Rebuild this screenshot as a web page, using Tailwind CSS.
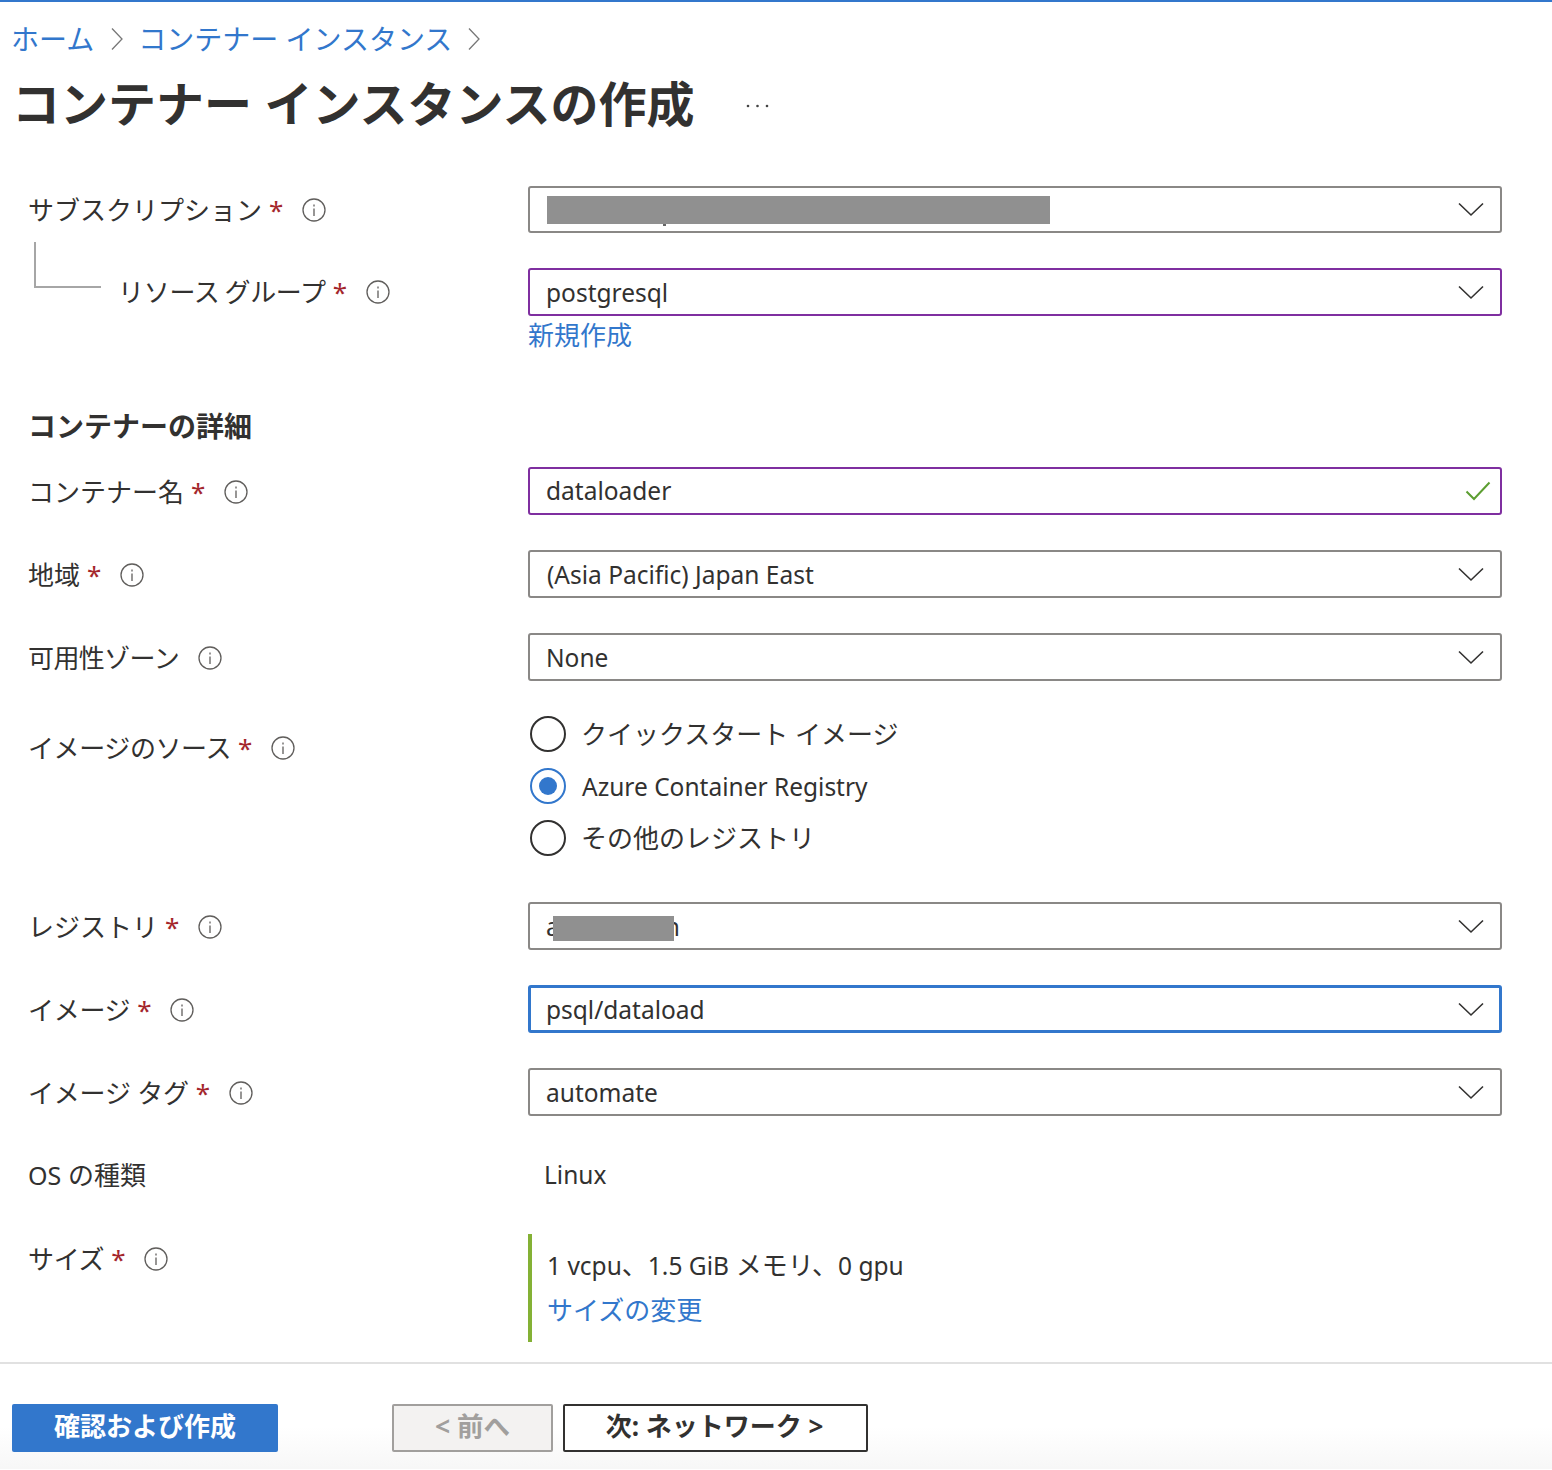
<!DOCTYPE html>
<html lang="ja">
<head>
<meta charset="utf-8">
<script src="https://cdn.jsdelivr.net/npm/@tailwindcss/browser@4"></script>
</head>
<body class="bg-white">
<div class="relative w-[1552px] h-[1470px] overflow-hidden border-t-2 border-[#3277cc] text-[#323130] text-[26px] leading-[36px] font-['Noto_Sans','Noto_Sans_CJK_JP',sans-serif]">

  <nav class="flex items-center h-[36px] mt-[19px] pl-[11px] text-[28px] text-[#3277cc]">
    <span>ホーム</span>
    <svg class="w-[14px] h-[24px] ml-[16px] mr-[14px]" viewBox="0 0 14 24" fill="none" stroke="#777" stroke-width="1.3"><path d="M2 1.500 L12 12 L2 22.500"/></svg>
    <span>コンテナー インスタンス</span>
    <svg class="w-[14px] h-[24px] ml-[15px]" viewBox="0 0 14 24" fill="none" stroke="#777" stroke-width="1.3"><path d="M2 1.500 L12 12 L2 22.500"/></svg>
  </nav>

  <div class="flex items-center h-[64px] mt-[15px] pl-[12px]">
    <h1 class="text-[48px] leading-[64px] font-bold">コンテナー インスタンスの作成</h1>
    <svg class="w-[24px] h-[4px] ml-[51px] mt-[4px]" viewBox="0 0 24 4" fill="#444"><circle cx="2" cy="2" r="1.300"/><circle cx="11.500" cy="2" r="1.300"/><circle cx="21" cy="2" r="1.300"/></svg>
  </div>

  <main class="pl-[28px] pt-[50px]">
    <!-- subscription -->
    <div class="flex h-[47px] mb-[35px]">
      <div class="w-[500px] flex items-center">サブスクリプション<span class="text-[#a4262c] ml-[7px]">*</span>
        <svg class="w-[24px] h-[24px] ml-[19px]" viewBox="0 0 24 24" fill="none" stroke="#605e5c" stroke-width="1.300"><circle cx="12" cy="12" r="11"/><path d="M12 10.500V18M12 6.500V8.500"/></svg>
      </div>
      <div class="relative w-[974px] h-[47px] flex items-center justify-between border-2 border-[#8a8886] rounded-[3px] pl-[17px] pr-[16px]">
        <div class="w-[503px] h-[28px] bg-[#909090]"></div>
        <span class="absolute left-[133px] top-[36px] w-[3px] h-[2px] bg-[#666]"></span>
        <svg class="w-[26px] h-[15px]" viewBox="0 0 26 15" fill="none" stroke="#323130" stroke-width="1.600"><path d="M1 1.500 L13 13 L25 1.500"/></svg>
      </div>
    </div>

    <!-- resource group -->
    <div class="flex h-[48px]">
      <div class="w-[500px] flex items-center pl-[90px] tracking-[-0.3px] [word-spacing:-1.500px]">リソース グループ<span class="text-[#a4262c] ml-[7px]">*</span>
        <svg class="w-[24px] h-[24px] ml-[19px]" viewBox="0 0 24 24" fill="none" stroke="#605e5c" stroke-width="1.300"><circle cx="12" cy="12" r="11"/><path d="M12 10.500V18M12 6.500V8.500"/></svg>
      </div>
      <div class="w-[974px] h-[48px] flex items-center justify-between border-2 border-[#7f2fa0] rounded-[3px] pl-[16px] pr-[16px]">
        <span class="text-[24.5px] mt-[2px]">postgresql</span>
        <svg class="w-[26px] h-[15px]" viewBox="0 0 26 15" fill="none" stroke="#323130" stroke-width="1.600"><path d="M1 1.500 L13 13 L25 1.500"/></svg>
      </div>
    </div>
    <div class="pl-[500px] h-[40px] leading-[38px] text-[#3277cc]">新規作成</div>

    <h2 class="font-bold text-[28px] leading-[36px] mt-[52px] mb-[23px]">コンテナーの詳細</h2>

    <!-- container name -->
    <div class="flex h-[48px] mb-[35px]">
      <div class="w-[500px] pt-[1px] flex items-center">コンテナー名<span class="text-[#a4262c] ml-[7px]">*</span>
        <svg class="w-[24px] h-[24px] ml-[19px]" viewBox="0 0 24 24" fill="none" stroke="#605e5c" stroke-width="1.300"><circle cx="12" cy="12" r="11"/><path d="M12 10.500V18M12 6.500V8.500"/></svg>
      </div>
      <div class="w-[974px] h-[48px] flex items-center justify-between border-2 border-[#7f2fa0] rounded-[3px] pl-[16px] pr-[9px]">
        <span class="text-[24.5px]">dataloader</span>
        <svg class="w-[26px] h-[20px]" viewBox="0 0 26 20" fill="none" stroke="#5c9e31" stroke-width="2"><path d="M1.500 10.500 L9 18 L24.500 1.500"/></svg>
      </div>
    </div>

    <!-- region -->
    <div class="flex h-[48px] mb-[35px]">
      <div class="w-[500px] pt-[1px] flex items-center">地域<span class="text-[#a4262c] ml-[7px]">*</span>
        <svg class="w-[24px] h-[24px] ml-[19px]" viewBox="0 0 24 24" fill="none" stroke="#605e5c" stroke-width="1.300"><circle cx="12" cy="12" r="11"/><path d="M12 10.500V18M12 6.500V8.500"/></svg>
      </div>
      <div class="w-[974px] h-[48px] flex items-center justify-between border-2 border-[#8a8886] rounded-[3px] pl-[17px] pr-[16px]">
        <span class="text-[24.5px] mt-[2px]">(Asia Pacific) Japan East</span>
        <svg class="w-[26px] h-[15px]" viewBox="0 0 26 15" fill="none" stroke="#323130" stroke-width="1.600"><path d="M1 1.500 L13 13 L25 1.500"/></svg>
      </div>
    </div>

    <!-- zone -->
    <div class="flex h-[48px] mb-[27px]">
      <div class="w-[500px] pt-[1px] flex items-center tracking-[-0.6px]">可用性ゾーン
        <svg class="w-[24px] h-[24px] ml-[19px]" viewBox="0 0 24 24" fill="none" stroke="#605e5c" stroke-width="1.300"><circle cx="12" cy="12" r="11"/><path d="M12 10.500V18M12 6.500V8.500"/></svg>
      </div>
      <div class="w-[974px] h-[48px] flex items-center justify-between border-2 border-[#8a8886] rounded-[3px] pl-[16px] pr-[16px]">
        <span class="text-[24.5px] mt-[2px]">None</span>
        <svg class="w-[26px] h-[15px]" viewBox="0 0 26 15" fill="none" stroke="#323130" stroke-width="1.600"><path d="M1 1.500 L13 13 L25 1.500"/></svg>
      </div>
    </div>

    <!-- image source -->
    <div class="flex h-[194px]">
      <div class="w-[500px] h-[36px] mt-[22px] flex items-center tracking-[-0.4px]">イメージのソース<span class="text-[#a4262c] ml-[7px]">*</span>
        <svg class="w-[24px] h-[24px] ml-[19px]" viewBox="0 0 24 24" fill="none" stroke="#605e5c" stroke-width="1.300"><circle cx="12" cy="12" r="11"/><path d="M12 10.500V18M12 6.500V8.500"/></svg>
      </div>
      <div class="w-[974px] flex flex-col pl-[2px] pt-[8px]">
        <div class="flex items-center gap-[15px] h-[36px] mb-[16px]"><span class="w-[36px] h-[36px] rounded-full border-2 border-[#323130]"></span><span>クイックスタート イメージ</span></div>
        <div class="flex items-center gap-[16px] h-[36px] mb-[16px]"><span class="w-[36px] h-[36px] rounded-full border-2 border-[#3277cc] flex items-center justify-center"><span class="w-[18px] h-[18px] rounded-full bg-[#3277cc]"></span></span><span class="text-[24.5px] mt-[2px]">Azure Container Registry</span></div>
        <div class="flex items-center gap-[15px] h-[36px]"><span class="w-[36px] h-[36px] rounded-full border-2 border-[#323130]"></span><span>その他のレジストリ</span></div>
      </div>
    </div>

    <!-- registry -->
    <div class="flex h-[48px] mb-[35px]">
      <div class="w-[500px] pt-[1px] flex items-center">レジストリ<span class="text-[#a4262c] ml-[7px]">*</span>
        <svg class="w-[24px] h-[24px] ml-[19px]" viewBox="0 0 24 24" fill="none" stroke="#605e5c" stroke-width="1.300"><circle cx="12" cy="12" r="11"/><path d="M12 10.500V18M12 6.500V8.500"/></svg>
      </div>
      <div class="relative w-[974px] h-[48px] flex items-center justify-between border-2 border-[#8a8886] rounded-[3px] pl-[16px] pr-[16px]">
        <span class="w-[134px] flex justify-between text-[24.5px] mt-[2px]"><span>a</span><span>n</span></span>
        <div class="absolute left-[23px] top-[12px] w-[121px] h-[25px] bg-[#909090]"></div>
        <svg class="w-[26px] h-[15px]" viewBox="0 0 26 15" fill="none" stroke="#323130" stroke-width="1.600"><path d="M1 1.500 L13 13 L25 1.500"/></svg>
      </div>
    </div>

    <!-- image -->
    <div class="flex h-[48px] mb-[35px]">
      <div class="w-[500px] pt-[1px] flex items-center tracking-[-0.3px]">イメージ<span class="text-[#a4262c] ml-[7px]">*</span>
        <svg class="w-[24px] h-[24px] ml-[19px]" viewBox="0 0 24 24" fill="none" stroke="#605e5c" stroke-width="1.300"><circle cx="12" cy="12" r="11"/><path d="M12 10.500V18M12 6.500V8.500"/></svg>
      </div>
      <div class="w-[974px] h-[48px] flex items-center justify-between border-3 border-[#3277cc] rounded-[3px] pl-[15px] pr-[15px]">
        <span class="text-[24.5px] mt-[2px]">psql/dataload</span>
        <svg class="w-[26px] h-[15px]" viewBox="0 0 26 15" fill="none" stroke="#323130" stroke-width="1.600"><path d="M1 1.500 L13 13 L25 1.500"/></svg>
      </div>
    </div>

    <!-- tag -->
    <div class="flex h-[48px] mb-[41px]">
      <div class="w-[500px] pt-[1px] flex items-center tracking-[-0.2px]">イメージ タグ<span class="text-[#a4262c] ml-[7px]">*</span>
        <svg class="w-[24px] h-[24px] ml-[19px]" viewBox="0 0 24 24" fill="none" stroke="#605e5c" stroke-width="1.300"><circle cx="12" cy="12" r="11"/><path d="M12 10.500V18M12 6.500V8.500"/></svg>
      </div>
      <div class="w-[974px] h-[48px] flex items-center justify-between border-2 border-[#8a8886] rounded-[3px] pl-[16px] pr-[16px]">
        <span class="text-[24.5px] mt-[2px]">automate</span>
        <svg class="w-[26px] h-[15px]" viewBox="0 0 26 15" fill="none" stroke="#323130" stroke-width="1.600"><path d="M1 1.500 L13 13 L25 1.500"/></svg>
      </div>
    </div>

    <!-- os -->
    <div class="flex h-[36px] mb-[41px]">
      <div class="w-[516px]"><span class="text-[25px]">OS</span> の種類</div>
      <div class="text-[24.5px]">Linux</div>
    </div>

    <!-- size -->
    <div class="flex h-[108px]">
      <div class="w-[500px] h-[36px] mt-[7px] flex items-center tracking-[-0.3px]">サイズ<span class="text-[#a4262c] ml-[7px]">*</span>
        <svg class="w-[24px] h-[24px] ml-[19px]" viewBox="0 0 24 24" fill="none" stroke="#605e5c" stroke-width="1.300"><circle cx="12" cy="12" r="11"/><path d="M12 10.500V18M12 6.500V8.500"/></svg>
      </div>
      <div class="border-l-[4px] border-[#84b135] pl-[15px] pt-[13px]">
        <div class="h-[45px]"><span class="text-[24.5px]">1 vcpu</span>、<span class="text-[24.5px]">1.5 GiB</span> メモリ、<span class="text-[24.5px]">0 gpu</span></div>
        <div class="text-[#3277cc]">サイズの変更</div>
      </div>
    </div>
  </main>

  <footer class="mt-[20px] h-[107px] border-t-2 border-[#e1e1e1] bg-gradient-to-b from-white from-60% to-[#f7f7f7] pt-[40px] pl-[12px] flex items-start">
    <button class="w-[266px] h-[48px] pb-[4px] bg-[#3277cc] rounded-[2px] text-white font-bold text-[26px]">確認および作成</button>
    <button class="w-[161px] h-[48px] pb-[4px] ml-[114px] bg-[#f3f2f1] border-2 border-[#a19f9d] rounded-[2px] text-[#a19f9d] font-bold text-[26.5px]">&lt; 前へ</button>
    <button class="w-[305px] h-[48px] pb-[4px] pr-[2px] ml-[10px] bg-white border-2 border-[#323130] rounded-[2px] text-[#323130] font-bold text-[26px]">次: ネットワーク &gt;</button>
  </footer>

  <!-- tree connector between subscription and resource group -->
  <div class="absolute left-[34px] top-[240px] w-[67px] h-[46px] border-l-2 border-b-2 border-[#a6a6a6]"></div>
</div>
</body>
</html>
